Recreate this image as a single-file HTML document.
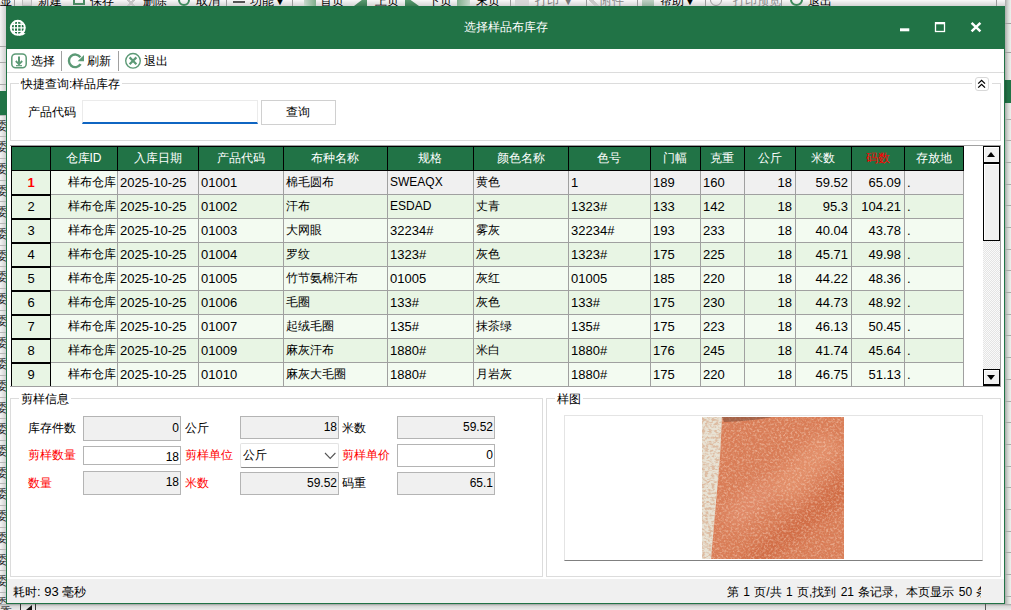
<!DOCTYPE html>
<html><head><meta charset="utf-8">
<style>
*{box-sizing:border-box;margin:0;padding:0}
html,body{width:1011px;height:610px;overflow:hidden;background:#fff}
body{position:relative;font-family:"Liberation Sans",sans-serif;font-size:12px;color:#000}
.a{position:absolute}
.lat{font-size:13px}
#bgtop{left:0;top:0;width:1011px;height:6px;background:linear-gradient(#f4f4f4,#d8d8d8)}
#bgleft{left:0;top:6px;width:6px;height:604px;background:linear-gradient(90deg,#f2f2f2,#c9c9c9)}
#bgright{left:1005px;top:0;width:6px;height:610px;background:linear-gradient(90deg,#b0b0b0,#e8e8e8)}
#bgbot{left:0;top:604px;width:1011px;height:6px;background:linear-gradient(#9a9a9a,#e0e0e0)}
#dlg{left:6px;top:6px;width:999px;height:598px;background:#217346}
#client{left:7px;top:49px;width:997px;height:554px;background:#fff}
#title{left:6px;top:6px;width:999px;height:43px;color:#fff;text-align:center;line-height:43px;font-size:12px}
.tb{top:52px;height:18px;line-height:18px}
.sep{top:51px;width:1px;height:20px;background:#a0a0a0}
#tbline{left:7px;top:72px;width:997px;height:1px;background:#dcdcdc}
.gb{border:1px solid #dcdcdc}
.gbt{background:#fff;padding:0 2px;height:14px;line-height:14px}
#grid{left:11px;top:146px;width:953px;height:241px;overflow:hidden;background:#fff}
.hd{position:absolute;top:147px;height:23px;color:#fff;text-align:center;line-height:23px;white-space:nowrap;padding-right:1px}
.c{position:absolute;height:23px;line-height:23px;padding:0 3px 0 2px;white-space:nowrap;overflow:hidden}
.r{text-align:right}
.rh{position:absolute;height:23px;line-height:23px;text-align:center}
.inp{position:absolute;border:1px solid #b4b4b4;background:#f0f0f0;text-align:right;padding-right:1px;font-size:12px}
.inpw{background:#fff}
.lbl{position:absolute;height:16px;line-height:16px}
.red{color:#f00}
</style></head><body>
<div class="a" style="left:0;top:0;width:1011px;height:6px;overflow:hidden;background:linear-gradient(#f8f8f8,#d4d4d4)"><div class="a" style="left:0px;top:-6px;color:#000;line-height:14px;white-space:nowrap">显</div><div class="a" style="left:38px;top:-6px;color:#000;line-height:14px;white-space:nowrap">新建</div><div class="a" style="left:90px;top:-6px;color:#000;line-height:14px;white-space:nowrap">保存</div><div class="a" style="left:143px;top:-6px;color:#000;line-height:14px;white-space:nowrap">删除</div><div class="a" style="left:196px;top:-6px;color:#000;line-height:14px;white-space:nowrap">取消</div><div class="a" style="left:250px;top:-6px;color:#000;line-height:14px;white-space:nowrap">功能▼</div><div class="a" style="left:320px;top:-6px;color:#000;line-height:14px;white-space:nowrap">首页</div><div class="a" style="left:375px;top:-6px;color:#000;line-height:14px;white-space:nowrap">上页</div><div class="a" style="left:428px;top:-6px;color:#000;line-height:14px;white-space:nowrap">下页</div><div class="a" style="left:476px;top:-6px;color:#000;line-height:14px;white-space:nowrap">末页</div><div class="a" style="left:535px;top:-6px;color:#777;line-height:14px;white-space:nowrap">打印 ▼</div><div class="a" style="left:600px;top:-6px;color:#888;line-height:14px;white-space:nowrap">附件</div><div class="a" style="left:660px;top:-6px;color:#000;line-height:14px;white-space:nowrap">帮助▼</div><div class="a" style="left:733px;top:-6px;color:#888;line-height:14px;white-space:nowrap">打印预览</div><div class="a" style="left:808px;top:-6px;color:#000;line-height:14px;white-space:nowrap">退出</div><div class="a" style="left:22px;top:0;width:10px;height:6px;border:1px solid #bbb;border-top:0;background:linear-gradient(#eee,#ccc)"></div><div class="a" style="left:73px;top:0;width:12px;height:5px;border:2px solid #4a8a62;border-top:0"></div><div class="a" style="left:125px;top:0;width:12px;height:6px;background:linear-gradient(45deg,transparent 40%,#c4c4c4 40%,#c4c4c4 60%,transparent 60%),linear-gradient(-45deg,transparent 40%,#c4c4c4 40%,#c4c4c4 60%,transparent 60%)"></div><div class="a" style="left:178px;top:-6px;width:12px;height:12px;border:2px solid #3f8a5c;border-radius:50%"></div><div class="a" style="left:233px;top:1px;width:12px;height:2px;background:#555;box-shadow:0 -3px #555"></div><div class="a" style="left:304px;top:0;width:12px;height:6px;background:linear-gradient(90deg,#c8d8cc,#7fae8c)"></div><div class="a" style="left:354px;top:0;width:13px;height:6px;background:linear-gradient(#5a9a70,#3a7a52);clip-path:polygon(60% 0,100% 0,100% 100%,0 100%)"></div><div class="a" style="left:405px;top:0;width:14px;height:6px;background:linear-gradient(#5a9a70,#3a7a52);clip-path:polygon(0 0,40% 0,100% 100%,0 100%)"></div><div class="a" style="left:457px;top:0;width:13px;height:6px;background:linear-gradient(90deg,#7fae8c,#c8d8cc)"></div><div class="a" style="left:515px;top:0;width:14px;height:6px;background:#ccc;opacity:.7"></div><div class="a" style="left:588px;top:0;width:12px;height:6px;background:linear-gradient(45deg,transparent 35%,#c8c8c8 35%,#c8c8c8 65%,transparent 65%)"></div><div class="a" style="left:642px;top:0;width:12px;height:6px;background:linear-gradient(#9ab8a2,#6a9a7a);opacity:.6"></div><div class="a" style="left:710px;top:-6px;width:12px;height:12px;border:1px solid #999;border-radius:50%"></div><div class="a" style="left:790px;top:-6px;width:13px;height:12px;border:2px solid #3f8a5c;border-radius:50%"></div><div class="a" style="left:14px;top:0;width:1px;height:6px;background:#9a9a9a"></div><div class="a" style="left:226px;top:0;width:1px;height:6px;background:#9a9a9a"></div><div class="a" style="left:292px;top:0;width:1px;height:6px;background:#9a9a9a"></div><div class="a" style="left:510px;top:0;width:1px;height:6px;background:#9a9a9a"></div><div class="a" style="left:586px;top:0;width:1px;height:6px;background:#9a9a9a"></div><div class="a" style="left:637px;top:0;width:1px;height:6px;background:#9a9a9a"></div><div class="a" style="left:705px;top:0;width:1px;height:6px;background:#9a9a9a"></div><div class="a" style="left:781px;top:0;width:1px;height:6px;background:#9a9a9a"></div><div class="a" style="left:996px;top:0;width:1px;height:6px;background:#9a9a9a"></div></div>
<div class="a" style="left:0;top:6px;width:6px;height:604px;overflow:hidden;background:linear-gradient(90deg,#f4f4f4,#cfcfcf)"><div class="a" style="left:0;top:40px;width:6px;height:1px;background:#a8a8a8"></div><div class="a" style="left:0;top:56px;width:6px;height:1px;background:#a8a8a8"></div><div class="a" style="left:0;top:78px;width:6px;height:1px;background:#a8a8a8"></div><div class="a" style="left:0;top:85px;width:6px;height:24px;background:#217346"></div><div class="a" style="left:0;top:109px;width:6px;height:1px;background:#b8b8b8"></div><div class="a" style="left:-4px;top:113px;font-size:12px;line-height:14px;color:#222">委</div><div class="a" style="left:0;top:130px;width:6px;height:1px;background:#b8b8b8"></div><div class="a" style="left:-4px;top:134px;font-size:12px;line-height:14px;color:#222">委</div><div class="a" style="left:0;top:152px;width:6px;height:1px;background:#b8b8b8"></div><div class="a" style="left:-4px;top:156px;font-size:12px;line-height:14px;color:#222">委</div><div class="a" style="left:0;top:174px;width:6px;height:1px;background:#b8b8b8"></div><div class="a" style="left:-4px;top:178px;font-size:12px;line-height:14px;color:#222">委</div><div class="a" style="left:0;top:195px;width:6px;height:1px;background:#b8b8b8"></div><div class="a" style="left:-4px;top:199px;font-size:12px;line-height:14px;color:#222">委</div><div class="a" style="left:0;top:217px;width:6px;height:1px;background:#b8b8b8"></div><div class="a" style="left:-4px;top:221px;font-size:12px;line-height:14px;color:#222">委</div><div class="a" style="left:0;top:239px;width:6px;height:1px;background:#b8b8b8"></div><div class="a" style="left:-4px;top:243px;font-size:12px;line-height:14px;color:#222">委</div><div class="a" style="left:0;top:260px;width:6px;height:1px;background:#b8b8b8"></div><div class="a" style="left:-4px;top:264px;font-size:12px;line-height:14px;color:#222">委</div><div class="a" style="left:0;top:282px;width:6px;height:1px;background:#b8b8b8"></div><div class="a" style="left:-4px;top:286px;font-size:12px;line-height:14px;color:#222">委</div><div class="a" style="left:0;top:304px;width:6px;height:1px;background:#b8b8b8"></div><div class="a" style="left:-4px;top:308px;font-size:12px;line-height:14px;color:#222">委</div><div class="a" style="left:0;top:326px;width:6px;height:1px;background:#b8b8b8"></div><div class="a" style="left:-4px;top:330px;font-size:12px;line-height:14px;color:#222">委</div><div class="a" style="left:0;top:347px;width:6px;height:1px;background:#b8b8b8"></div><div class="a" style="left:-4px;top:351px;font-size:12px;line-height:14px;color:#222">委</div><div class="a" style="left:0;top:369px;width:6px;height:1px;background:#b8b8b8"></div><div class="a" style="left:-4px;top:373px;font-size:12px;line-height:14px;color:#222">委</div><div class="a" style="left:0;top:391px;width:6px;height:1px;background:#b8b8b8"></div><div class="a" style="left:-4px;top:395px;font-size:12px;line-height:14px;color:#222">委</div><div class="a" style="left:0;top:412px;width:6px;height:1px;background:#b8b8b8"></div><div class="a" style="left:-4px;top:416px;font-size:12px;line-height:14px;color:#222">委</div><div class="a" style="left:0;top:434px;width:6px;height:1px;background:#b8b8b8"></div><div class="a" style="left:-4px;top:438px;font-size:12px;line-height:14px;color:#222">委</div><div class="a" style="left:0;top:456px;width:6px;height:1px;background:#b8b8b8"></div><div class="a" style="left:-4px;top:460px;font-size:12px;line-height:14px;color:#222">委</div><div class="a" style="left:0;top:477px;width:6px;height:1px;background:#b8b8b8"></div><div class="a" style="left:-4px;top:481px;font-size:12px;line-height:14px;color:#222">委</div><div class="a" style="left:0;top:499px;width:6px;height:1px;background:#b8b8b8"></div><div class="a" style="left:-4px;top:503px;font-size:12px;line-height:14px;color:#222">委</div><div class="a" style="left:0;top:521px;width:6px;height:1px;background:#b8b8b8"></div><div class="a" style="left:-4px;top:525px;font-size:12px;line-height:14px;color:#222">委</div><div class="a" style="left:0;top:543px;width:6px;height:1px;background:#b8b8b8"></div><div class="a" style="left:-4px;top:547px;font-size:12px;line-height:14px;color:#222">委</div><div class="a" style="left:0;top:564px;width:6px;height:1px;background:#b8b8b8"></div><div class="a" style="left:-4px;top:568px;font-size:12px;line-height:14px;color:#222">委</div><div class="a" style="left:0;top:586px;width:6px;height:1px;background:#b8b8b8"></div><div class="a" style="left:-4px;top:590px;font-size:12px;line-height:14px;color:#222">委</div></div>
<div class="a" style="left:1005px;top:0;width:6px;height:610px;overflow:hidden;background:linear-gradient(90deg,#a9aba9,#d4d8d4 3px,#eef2ee)"><div class="a" style="left:0;top:23px;width:6px;height:1px;background:#a0a0a0"></div><div class="a" style="left:0;top:52px;width:6px;height:1px;background:#a0a0a0"></div><div class="a" style="left:0;top:84px;width:6px;height:1px;background:#a0a0a0"></div><div class="a" style="left:0;top:80px;width:6px;height:23px;background:linear-gradient(90deg,#1e5a38,#217346 3px)"></div><div class="a" style="left:0;top:119px;width:6px;height:1px;background:#a8aca8"></div><div class="a" style="left:0;top:140px;width:6px;height:1px;background:#a8aca8"></div><div class="a" style="left:0;top:162px;width:6px;height:1px;background:#a8aca8"></div><div class="a" style="left:0;top:184px;width:6px;height:1px;background:#a8aca8"></div><div class="a" style="left:0;top:205px;width:6px;height:1px;background:#a8aca8"></div><div class="a" style="left:0;top:227px;width:6px;height:1px;background:#a8aca8"></div><div class="a" style="left:0;top:249px;width:6px;height:1px;background:#a8aca8"></div><div class="a" style="left:0;top:270px;width:6px;height:1px;background:#a8aca8"></div><div class="a" style="left:0;top:292px;width:6px;height:1px;background:#a8aca8"></div><div class="a" style="left:0;top:314px;width:6px;height:1px;background:#a8aca8"></div><div class="a" style="left:0;top:335px;width:6px;height:1px;background:#a8aca8"></div><div class="a" style="left:0;top:357px;width:6px;height:1px;background:#a8aca8"></div><div class="a" style="left:0;top:379px;width:6px;height:1px;background:#a8aca8"></div><div class="a" style="left:0;top:401px;width:6px;height:1px;background:#a8aca8"></div><div class="a" style="left:0;top:422px;width:6px;height:1px;background:#a8aca8"></div><div class="a" style="left:0;top:444px;width:6px;height:1px;background:#a8aca8"></div><div class="a" style="left:0;top:466px;width:6px;height:1px;background:#a8aca8"></div><div class="a" style="left:0;top:487px;width:6px;height:1px;background:#a8aca8"></div><div class="a" style="left:0;top:509px;width:6px;height:1px;background:#a8aca8"></div><div class="a" style="left:0;top:531px;width:6px;height:1px;background:#a8aca8"></div><div class="a" style="left:0;top:552px;width:6px;height:1px;background:#a8aca8"></div><div class="a" style="left:0;top:574px;width:6px;height:1px;background:#a8aca8"></div><div class="a" style="left:0;top:596px;width:6px;height:1px;background:#a8aca8"></div></div>
<div class="a" style="left:0;top:604px;width:1011px;height:6px;overflow:hidden;background:linear-gradient(#a0a0a0,#d8d8d8 2px,#ececec)"><div class="a" style="left:0;top:1px;font-size:12px;line-height:14px;color:#222">委</div><div class="a" style="left:20px;top:0;width:1px;height:6px;background:#333"></div><div class="a" style="left:26px;top:1px;width:0;height:0;border-top:5px solid transparent;border-right:6px solid #111"></div><div class="a" style="left:35px;top:0;width:1px;height:6px;background:#333"></div><div class="a" style="left:985px;top:0;width:1px;height:6px;background:#555"></div></div>
<div class="a" id="dlg"></div>
<div class="a" id="client"></div>

<svg class="a" style="left:0;top:0" width="200" height="80" viewBox="0 0 200 80">
 <g fill="none" stroke="#5c9a76">
  <rect x="11.8" y="54" width="14.4" height="13.8" rx="3.8" stroke-width="1.5"/>
  <path d="M19 56.5V64.5" stroke-width="2"/>
  <path d="M15.8 61L19 64.3L22.2 61" stroke-width="1.8"/>
  <path d="M16 65.7H22" stroke-width="1.2"/>
  <path d="M80.6 64.2A6.3 6.3 0 1 1 80.4 57.2" stroke-width="2.4"/>
  <circle cx="133" cy="60.8" r="7.3" stroke-width="1.4"/>
  <path d="M129.6 57.4L136.4 64.2M136.4 57.4L129.6 64.2" stroke-width="2.2"/>
 </g>
 <path d="M84 55V61.2H77.6Z" fill="#5c9a76"/>
 <defs><clipPath id="gc"><circle cx="17.8" cy="27.8" r="7.5"/></clipPath></defs>
 <circle cx="17.8" cy="27.8" r="7" fill="none" stroke="#fff" stroke-width="1.9"/>
 <g clip-path="url(#gc)" stroke="#fff" fill="none">
  <path d="M9 24.3H27M9 27.9H27M9 31.4H27" stroke-width="1.25"/>
  <path d="M14.4 18V38M17.6 18V38M21.2 18V38" stroke-width="1.2"/>
 </g>
 <path d="M18.5 35.8L21.5 32.2L25.6 33.6Q23 36 18.5 35.8Z" fill="#fff"/>
</svg>
<svg class="a" style="left:890px;top:12px" width="110" height="30" viewBox="890 12 110 30">
 <rect x="900" y="28.3" width="9.3" height="3" fill="#fff"/>
 <rect x="935.5" y="22.8" width="9" height="8.7" fill="none" stroke="#fff" stroke-width="1.3"/>
 <rect x="935" y="22" width="10" height="2.3" fill="#fff"/>
 <path d="M971.6 22.9L980.4 31.4M980.4 22.9L971.6 31.4" stroke="#fff" stroke-width="2.5"/>
</svg>
<div class="a" id="title">选择样品布库存</div>

<div class="a tb" style="left:31px">选择</div>
<div class="a sep" style="left:61px"></div>
<div class="a tb" style="left:87px">刷新</div>
<div class="a sep" style="left:118px"></div>
<div class="a tb" style="left:144px">退出</div>
<div class="a" id="tbline"></div>

<div class="a gb" style="left:10px;top:83px;width:991px;height:58px"></div>
<div class="a gbt" style="left:19px;top:77px">快捷查询:样品库存</div>
<div class="a" style="left:972px;top:80px;width:20px;height:6px;background:#fff"></div>
<div class="a" style="left:975px;top:77px;width:14px;height:14px;border:1px solid #d8d8d8;border-radius:3px;background:#fff"></div>
<svg class="a" style="left:975px;top:77px" width="14" height="14" viewBox="975 77 14 14"><path d="M978.2 83.6L981.6 80.3L985 83.6M978.2 87.6L981.6 84.3L985 87.6" fill="none" stroke="#000" stroke-width="1.3"/></svg>
<div class="a lbl" style="left:28px;top:104px">产品代码</div>
<div class="a" style="left:82px;top:100px;width:176px;height:24px;border:1px solid #ebebeb;border-bottom:2px solid #0f65c2;background:#fff"></div>
<div class="a" style="left:261px;top:100px;width:75px;height:25px;border:1px solid #d0d0d0;background:#fff;text-align:center;line-height:23px;padding-right:2px">查询</div>

<div class="a" style="left:10px;top:145px;width:991px;height:1px;background:#a0a0a0;"></div>
<div class="a" style="left:1000px;top:145px;width:1px;height:242px;background:#a0a0a0;"></div>
<div class="a" style="left:10px;top:386px;width:991px;height:1px;background:#a0a0a0;"></div>
<div class="a" style="left:11px;top:146px;width:953px;height:25px;background:#000;"></div>
<div class="a" style="left:12px;top:147px;width:951px;height:23px;background:#217346;"></div>
<div class="a" style="left:50px;top:146px;width:1px;height:25px;background:#000;"></div>
<div class="a" style="left:117px;top:146px;width:1px;height:25px;background:#000;"></div>
<div class="a" style="left:198px;top:146px;width:1px;height:25px;background:#000;"></div>
<div class="a" style="left:283px;top:146px;width:1px;height:25px;background:#000;"></div>
<div class="a" style="left:387px;top:146px;width:1px;height:25px;background:#000;"></div>
<div class="a" style="left:473px;top:146px;width:1px;height:25px;background:#000;"></div>
<div class="a" style="left:568px;top:146px;width:1px;height:25px;background:#000;"></div>
<div class="a" style="left:650px;top:146px;width:1px;height:25px;background:#000;"></div>
<div class="a" style="left:700px;top:146px;width:1px;height:25px;background:#000;"></div>
<div class="a" style="left:744px;top:146px;width:1px;height:25px;background:#000;"></div>
<div class="a" style="left:795px;top:146px;width:1px;height:25px;background:#000;"></div>
<div class="a" style="left:851px;top:146px;width:1px;height:25px;background:#000;"></div>
<div class="a" style="left:904px;top:146px;width:1px;height:25px;background:#000;"></div>
<div class="hd" style="left:51px;width:66px;color:#fff">仓库<span class="lat" style="font-size:12px">ID</span></div>
<div class="hd" style="left:118px;width:80px;color:#fff">入库日期</div>
<div class="hd" style="left:199px;width:84px;color:#fff">产品代码</div>
<div class="hd" style="left:284px;width:103px;color:#fff">布种名称</div>
<div class="hd" style="left:388px;width:85px;color:#fff">规格</div>
<div class="hd" style="left:474px;width:94px;color:#fff">颜色名称</div>
<div class="hd" style="left:569px;width:81px;color:#fff">色号</div>
<div class="hd" style="left:651px;width:49px;color:#fff">门幅</div>
<div class="hd" style="left:701px;width:43px;color:#fff">克重</div>
<div class="hd" style="left:745px;width:50px;color:#fff">公斤</div>
<div class="hd" style="left:796px;width:55px;color:#fff">米数</div>
<div class="hd" style="left:852px;width:52px;color:#f00">码数</div>
<div class="hd" style="left:905px;width:58px;color:#fff">存放地</div>
<div class="a" style="left:51px;top:171px;width:912px;height:23px;background:#f0f0f0;"></div>
<div class="a" style="left:51px;top:171px;width:66px;height:23px;background:#f3fbf1;"></div>
<div class="c r" style="left:51px;top:171px;width:66px;padding-right:1.5px">样布仓库</div>
<div class="c" style="left:118px;top:171px;width:80px"><span class="lat">2025-10-25</span></div>
<div class="c" style="left:199px;top:171px;width:84px"><span class="lat">01001</span></div>
<div class="c" style="left:284px;top:171px;width:103px">棉毛圆布</div>
<div class="c" style="left:388px;top:171px;width:85px"><span class="lat" style="font-size:12px">SWEAQX</span></div>
<div class="c" style="left:474px;top:171px;width:94px">黄色</div>
<div class="c" style="left:569px;top:171px;width:81px"><span class="lat">1</span></div>
<div class="c" style="left:651px;top:171px;width:49px"><span class="lat">189</span></div>
<div class="c" style="left:701px;top:171px;width:43px"><span class="lat">160</span></div>
<div class="c r" style="left:745px;top:171px;width:50px"><span class="lat">18</span></div>
<div class="c r" style="left:796px;top:171px;width:55px"><span class="lat">59.52</span></div>
<div class="c r" style="left:852px;top:171px;width:52px"><span class="lat">65.09</span></div>
<div class="c" style="left:905px;top:171px;width:58px"><span class="lat">.</span></div>
<div class="a" style="left:51px;top:194px;width:913px;height:1px;background:#a0a0a0;"></div>
<div class="a" style="left:51px;top:195px;width:912px;height:23px;background:#e8f5e4;"></div>
<div class="c r" style="left:51px;top:195px;width:66px;padding-right:1.5px">样布仓库</div>
<div class="c" style="left:118px;top:195px;width:80px"><span class="lat">2025-10-25</span></div>
<div class="c" style="left:199px;top:195px;width:84px"><span class="lat">01002</span></div>
<div class="c" style="left:284px;top:195px;width:103px">汗布</div>
<div class="c" style="left:388px;top:195px;width:85px"><span class="lat" style="font-size:12px">ESDAD</span></div>
<div class="c" style="left:474px;top:195px;width:94px">丈青</div>
<div class="c" style="left:569px;top:195px;width:81px"><span class="lat">1323#</span></div>
<div class="c" style="left:651px;top:195px;width:49px"><span class="lat">133</span></div>
<div class="c" style="left:701px;top:195px;width:43px"><span class="lat">142</span></div>
<div class="c r" style="left:745px;top:195px;width:50px"><span class="lat">18</span></div>
<div class="c r" style="left:796px;top:195px;width:55px"><span class="lat">95.3</span></div>
<div class="c r" style="left:852px;top:195px;width:52px"><span class="lat">104.21</span></div>
<div class="c" style="left:905px;top:195px;width:58px"><span class="lat">.</span></div>
<div class="a" style="left:51px;top:218px;width:913px;height:1px;background:#a0a0a0;"></div>
<div class="a" style="left:51px;top:219px;width:912px;height:23px;background:#f3fbf1;"></div>
<div class="c r" style="left:51px;top:219px;width:66px;padding-right:1.5px">样布仓库</div>
<div class="c" style="left:118px;top:219px;width:80px"><span class="lat">2025-10-25</span></div>
<div class="c" style="left:199px;top:219px;width:84px"><span class="lat">01003</span></div>
<div class="c" style="left:284px;top:219px;width:103px">大网眼</div>
<div class="c" style="left:388px;top:219px;width:85px"><span class="lat">32234#</span></div>
<div class="c" style="left:474px;top:219px;width:94px">雾灰</div>
<div class="c" style="left:569px;top:219px;width:81px"><span class="lat">32234#</span></div>
<div class="c" style="left:651px;top:219px;width:49px"><span class="lat">193</span></div>
<div class="c" style="left:701px;top:219px;width:43px"><span class="lat">233</span></div>
<div class="c r" style="left:745px;top:219px;width:50px"><span class="lat">18</span></div>
<div class="c r" style="left:796px;top:219px;width:55px"><span class="lat">40.04</span></div>
<div class="c r" style="left:852px;top:219px;width:52px"><span class="lat">43.78</span></div>
<div class="c" style="left:905px;top:219px;width:58px"><span class="lat">.</span></div>
<div class="a" style="left:51px;top:242px;width:913px;height:1px;background:#a0a0a0;"></div>
<div class="a" style="left:51px;top:243px;width:912px;height:23px;background:#e8f5e4;"></div>
<div class="c r" style="left:51px;top:243px;width:66px;padding-right:1.5px">样布仓库</div>
<div class="c" style="left:118px;top:243px;width:80px"><span class="lat">2025-10-25</span></div>
<div class="c" style="left:199px;top:243px;width:84px"><span class="lat">01004</span></div>
<div class="c" style="left:284px;top:243px;width:103px">罗纹</div>
<div class="c" style="left:388px;top:243px;width:85px"><span class="lat">1323#</span></div>
<div class="c" style="left:474px;top:243px;width:94px">灰色</div>
<div class="c" style="left:569px;top:243px;width:81px"><span class="lat">1323#</span></div>
<div class="c" style="left:651px;top:243px;width:49px"><span class="lat">175</span></div>
<div class="c" style="left:701px;top:243px;width:43px"><span class="lat">225</span></div>
<div class="c r" style="left:745px;top:243px;width:50px"><span class="lat">18</span></div>
<div class="c r" style="left:796px;top:243px;width:55px"><span class="lat">45.71</span></div>
<div class="c r" style="left:852px;top:243px;width:52px"><span class="lat">49.98</span></div>
<div class="c" style="left:905px;top:243px;width:58px"><span class="lat">.</span></div>
<div class="a" style="left:51px;top:266px;width:913px;height:1px;background:#a0a0a0;"></div>
<div class="a" style="left:51px;top:267px;width:912px;height:23px;background:#f3fbf1;"></div>
<div class="c r" style="left:51px;top:267px;width:66px;padding-right:1.5px">样布仓库</div>
<div class="c" style="left:118px;top:267px;width:80px"><span class="lat">2025-10-25</span></div>
<div class="c" style="left:199px;top:267px;width:84px"><span class="lat">01005</span></div>
<div class="c" style="left:284px;top:267px;width:103px">竹节氨棉汗布</div>
<div class="c" style="left:388px;top:267px;width:85px"><span class="lat">01005</span></div>
<div class="c" style="left:474px;top:267px;width:94px">灰红</div>
<div class="c" style="left:569px;top:267px;width:81px"><span class="lat">01005</span></div>
<div class="c" style="left:651px;top:267px;width:49px"><span class="lat">185</span></div>
<div class="c" style="left:701px;top:267px;width:43px"><span class="lat">220</span></div>
<div class="c r" style="left:745px;top:267px;width:50px"><span class="lat">18</span></div>
<div class="c r" style="left:796px;top:267px;width:55px"><span class="lat">44.22</span></div>
<div class="c r" style="left:852px;top:267px;width:52px"><span class="lat">48.36</span></div>
<div class="c" style="left:905px;top:267px;width:58px"><span class="lat">.</span></div>
<div class="a" style="left:51px;top:290px;width:913px;height:1px;background:#a0a0a0;"></div>
<div class="a" style="left:51px;top:291px;width:912px;height:23px;background:#e8f5e4;"></div>
<div class="c r" style="left:51px;top:291px;width:66px;padding-right:1.5px">样布仓库</div>
<div class="c" style="left:118px;top:291px;width:80px"><span class="lat">2025-10-25</span></div>
<div class="c" style="left:199px;top:291px;width:84px"><span class="lat">01006</span></div>
<div class="c" style="left:284px;top:291px;width:103px">毛圈</div>
<div class="c" style="left:388px;top:291px;width:85px"><span class="lat">133#</span></div>
<div class="c" style="left:474px;top:291px;width:94px">灰色</div>
<div class="c" style="left:569px;top:291px;width:81px"><span class="lat">133#</span></div>
<div class="c" style="left:651px;top:291px;width:49px"><span class="lat">175</span></div>
<div class="c" style="left:701px;top:291px;width:43px"><span class="lat">230</span></div>
<div class="c r" style="left:745px;top:291px;width:50px"><span class="lat">18</span></div>
<div class="c r" style="left:796px;top:291px;width:55px"><span class="lat">44.73</span></div>
<div class="c r" style="left:852px;top:291px;width:52px"><span class="lat">48.92</span></div>
<div class="c" style="left:905px;top:291px;width:58px"><span class="lat">.</span></div>
<div class="a" style="left:51px;top:314px;width:913px;height:1px;background:#a0a0a0;"></div>
<div class="a" style="left:51px;top:315px;width:912px;height:23px;background:#f3fbf1;"></div>
<div class="c r" style="left:51px;top:315px;width:66px;padding-right:1.5px">样布仓库</div>
<div class="c" style="left:118px;top:315px;width:80px"><span class="lat">2025-10-25</span></div>
<div class="c" style="left:199px;top:315px;width:84px"><span class="lat">01007</span></div>
<div class="c" style="left:284px;top:315px;width:103px">起绒毛圈</div>
<div class="c" style="left:388px;top:315px;width:85px"><span class="lat">135#</span></div>
<div class="c" style="left:474px;top:315px;width:94px">抹茶绿</div>
<div class="c" style="left:569px;top:315px;width:81px"><span class="lat">135#</span></div>
<div class="c" style="left:651px;top:315px;width:49px"><span class="lat">175</span></div>
<div class="c" style="left:701px;top:315px;width:43px"><span class="lat">223</span></div>
<div class="c r" style="left:745px;top:315px;width:50px"><span class="lat">18</span></div>
<div class="c r" style="left:796px;top:315px;width:55px"><span class="lat">46.13</span></div>
<div class="c r" style="left:852px;top:315px;width:52px"><span class="lat">50.45</span></div>
<div class="c" style="left:905px;top:315px;width:58px"><span class="lat">.</span></div>
<div class="a" style="left:51px;top:338px;width:913px;height:1px;background:#a0a0a0;"></div>
<div class="a" style="left:51px;top:339px;width:912px;height:23px;background:#e8f5e4;"></div>
<div class="c r" style="left:51px;top:339px;width:66px;padding-right:1.5px">样布仓库</div>
<div class="c" style="left:118px;top:339px;width:80px"><span class="lat">2025-10-25</span></div>
<div class="c" style="left:199px;top:339px;width:84px"><span class="lat">01009</span></div>
<div class="c" style="left:284px;top:339px;width:103px">麻灰汗布</div>
<div class="c" style="left:388px;top:339px;width:85px"><span class="lat">1880#</span></div>
<div class="c" style="left:474px;top:339px;width:94px">米白</div>
<div class="c" style="left:569px;top:339px;width:81px"><span class="lat">1880#</span></div>
<div class="c" style="left:651px;top:339px;width:49px"><span class="lat">176</span></div>
<div class="c" style="left:701px;top:339px;width:43px"><span class="lat">245</span></div>
<div class="c r" style="left:745px;top:339px;width:50px"><span class="lat">18</span></div>
<div class="c r" style="left:796px;top:339px;width:55px"><span class="lat">41.74</span></div>
<div class="c r" style="left:852px;top:339px;width:52px"><span class="lat">45.64</span></div>
<div class="c" style="left:905px;top:339px;width:58px"><span class="lat">.</span></div>
<div class="a" style="left:51px;top:362px;width:913px;height:1px;background:#a0a0a0;"></div>
<div class="a" style="left:51px;top:363px;width:912px;height:23px;background:#f3fbf1;"></div>
<div class="c r" style="left:51px;top:363px;width:66px;padding-right:1.5px">样布仓库</div>
<div class="c" style="left:118px;top:363px;width:80px"><span class="lat">2025-10-25</span></div>
<div class="c" style="left:199px;top:363px;width:84px"><span class="lat">01010</span></div>
<div class="c" style="left:284px;top:363px;width:103px">麻灰大毛圈</div>
<div class="c" style="left:388px;top:363px;width:85px"><span class="lat">1880#</span></div>
<div class="c" style="left:474px;top:363px;width:94px">月岩灰</div>
<div class="c" style="left:569px;top:363px;width:81px"><span class="lat">1880#</span></div>
<div class="c" style="left:651px;top:363px;width:49px"><span class="lat">175</span></div>
<div class="c" style="left:701px;top:363px;width:43px"><span class="lat">220</span></div>
<div class="c r" style="left:745px;top:363px;width:50px"><span class="lat">18</span></div>
<div class="c r" style="left:796px;top:363px;width:55px"><span class="lat">46.75</span></div>
<div class="c r" style="left:852px;top:363px;width:52px"><span class="lat">51.13</span></div>
<div class="c" style="left:905px;top:363px;width:58px"><span class="lat">.</span></div>
<div class="a" style="left:51px;top:386px;width:913px;height:1px;background:#a0a0a0;"></div>
<div class="a" style="left:117px;top:171px;width:1px;height:215px;background:#a0a0a0;"></div>
<div class="a" style="left:198px;top:171px;width:1px;height:215px;background:#a0a0a0;"></div>
<div class="a" style="left:283px;top:171px;width:1px;height:215px;background:#a0a0a0;"></div>
<div class="a" style="left:387px;top:171px;width:1px;height:215px;background:#a0a0a0;"></div>
<div class="a" style="left:473px;top:171px;width:1px;height:215px;background:#a0a0a0;"></div>
<div class="a" style="left:568px;top:171px;width:1px;height:215px;background:#a0a0a0;"></div>
<div class="a" style="left:650px;top:171px;width:1px;height:215px;background:#a0a0a0;"></div>
<div class="a" style="left:700px;top:171px;width:1px;height:215px;background:#a0a0a0;"></div>
<div class="a" style="left:744px;top:171px;width:1px;height:215px;background:#a0a0a0;"></div>
<div class="a" style="left:795px;top:171px;width:1px;height:215px;background:#a0a0a0;"></div>
<div class="a" style="left:851px;top:171px;width:1px;height:215px;background:#a0a0a0;"></div>
<div class="a" style="left:904px;top:171px;width:1px;height:215px;background:#a0a0a0;"></div>
<div class="a" style="left:963px;top:171px;width:1px;height:215px;background:#a0a0a0;"></div>
<div class="a" style="left:11px;top:171px;width:40px;height:215px;background:#e8f5e4;"></div>
<div class="a" style="left:11px;top:146px;width:1px;height:240px;background:#000;"></div>
<div class="a" style="left:50px;top:171px;width:1px;height:215px;background:#000;"></div>
<div class="rh" style="left:12px;top:171px;width:38px;color:#f00;font-weight:bold"><span class="lat">1</span></div>
<div class="a" style="left:12px;top:194px;width:38px;height:2px;background:#000;"></div>
<div class="rh" style="left:12px;top:195px;width:38px;"><span class="lat">2</span></div>
<div class="a" style="left:12px;top:218px;width:38px;height:2px;background:#000;"></div>
<div class="rh" style="left:12px;top:219px;width:38px;"><span class="lat">3</span></div>
<div class="a" style="left:12px;top:242px;width:38px;height:2px;background:#000;"></div>
<div class="rh" style="left:12px;top:243px;width:38px;"><span class="lat">4</span></div>
<div class="a" style="left:12px;top:266px;width:38px;height:2px;background:#000;"></div>
<div class="rh" style="left:12px;top:267px;width:38px;"><span class="lat">5</span></div>
<div class="a" style="left:12px;top:290px;width:38px;height:2px;background:#000;"></div>
<div class="rh" style="left:12px;top:291px;width:38px;"><span class="lat">6</span></div>
<div class="a" style="left:12px;top:314px;width:38px;height:2px;background:#000;"></div>
<div class="rh" style="left:12px;top:315px;width:38px;"><span class="lat">7</span></div>
<div class="a" style="left:12px;top:338px;width:38px;height:2px;background:#000;"></div>
<div class="rh" style="left:12px;top:339px;width:38px;"><span class="lat">8</span></div>
<div class="a" style="left:12px;top:362px;width:38px;height:2px;background:#000;"></div>
<div class="rh" style="left:12px;top:363px;width:38px;"><span class="lat">9</span></div>
<div class="a" style="left:983px;top:146px;width:17px;height:240px;background:#f0f0f0;"></div>
<div class="a" style="left:983px;top:241px;width:17px;height:128px;background-image:repeating-conic-gradient(#e4e4e4 0 25%,#fafafa 0 50%);background-size:2px 2px"></div>
<div class="a" style="left:983px;top:146px;width:17px;height:18px;border:1px solid #000;border-bottom-width:2px;background:#f0f0f0;box-shadow:inset 1px 1px #fff"></div>
<div class="a" style="left:983px;top:163px;width:17px;height:78px;border:1px solid #000;border-bottom-width:1px;background:#f0f0f0;box-shadow:inset 1px 1px #fff"></div>
<div class="a" style="left:983px;top:369px;width:17px;height:17px;border:1px solid #000;border-bottom-width:2px;background:#f0f0f0;box-shadow:inset 1px 1px #fff"></div>
<div class="a" style="left:987px;top:152px;width:0;height:0;border-left:4.5px solid transparent;border-right:4.5px solid transparent;border-bottom:5px solid #000"></div>
<div class="a" style="left:987px;top:375px;width:0;height:0;border-left:4.5px solid transparent;border-right:4.5px solid transparent;border-top:5px solid #000"></div>

<!-- lower left groupbox -->
<div class="a gb" style="left:10px;top:398px;width:533px;height:179px"></div>
<div class="a gbt" style="left:19px;top:392px">剪样信息</div>
<div class="a lbl" style="left:28px;top:420px">库存件数</div>
<div class="a lbl red" style="left:28px;top:447px">剪样数量</div>
<div class="a lbl red" style="left:28px;top:475px">数量</div>
<div class="inp" style="left:83px;top:416px;width:98px;height:25px;line-height:22px">0</div>
<div class="inp inpw" style="left:83px;top:446px;width:98px;height:19px;line-height:20px">18</div>
<div class="inp" style="left:83px;top:471px;width:98px;height:24px;line-height:21px">18</div>
<div class="a lbl" style="left:185px;top:420px">公斤</div>
<div class="a lbl red" style="left:185px;top:447px">剪样单位</div>
<div class="a lbl red" style="left:185px;top:475px">米数</div>
<div class="inp" style="left:240px;top:416px;width:99px;height:23px;line-height:20px">18</div>
<div class="a" style="left:240px;top:443px;width:99px;height:25px;border:1px solid #e3e3e3;border-bottom:1px solid #868686;border-radius:2px;background:#fff;line-height:23px;padding-left:2px">公斤</div>
<svg class="a" style="left:320px;top:448px" width="20" height="15" viewBox="320 448 20 15"><path d="M325 453L330.2 458.4L335.4 453" fill="none" stroke="#555" stroke-width="1.1"/></svg>
<div class="inp" style="left:240px;top:472px;width:99px;height:23px;line-height:20px">59.52</div>
<div class="a lbl" style="left:342px;top:420px">米数</div>
<div class="a lbl red" style="left:342px;top:447px">剪样单价</div>
<div class="a lbl" style="left:342px;top:475px">码重</div>
<div class="inp" style="left:397px;top:416px;width:98px;height:23px;line-height:21px">59.52</div>
<div class="inp inpw" style="left:397px;top:444px;width:98px;height:23px;line-height:21px">0</div>
<div class="inp" style="left:397px;top:472px;width:98px;height:23px;line-height:21px">65.1</div>

<!-- lower right groupbox -->
<div class="a gb" style="left:546px;top:398px;width:455px;height:179px"></div>
<div class="a gbt" style="left:555px;top:392px">样图</div>
<div class="a" style="left:564px;top:415px;width:419px;height:146px;border:1px solid #e4e4e4;border-bottom:1px solid #808080;background:#fff"></div>
<svg class="a" style="left:702px;top:417px" width="142" height="142" viewBox="0 0 142 142">
 <defs>
  <filter id="tx" x="0" y="0" width="100%" height="100%">
   <feTurbulence type="fractalNoise" baseFrequency="0.45" numOctaves="2" seed="7"/>
   <feColorMatrix type="matrix" values="0 0 0 0 0.97  0 0 0 0 0.72  0 0 0 0 0.58  -3.2 0 0 0 1.75"/>
  </filter>
  <filter id="tx2" x="0" y="0" width="100%" height="100%">
   <feTurbulence type="fractalNoise" baseFrequency="0.5" numOctaves="2" seed="11"/>
   <feColorMatrix type="matrix" values="0 0 0 0 0.68  0 0 0 0 0.32  0 0 0 0 0.18  3.2 0 0 0 -1.5"/>
  </filter>
  <filter id="bl"><feGaussianBlur stdDeviation="7"/></filter>
  <filter id="rim" x="0" y="0" width="100%" height="100%">
   <feTurbulence type="fractalNoise" baseFrequency="0.3 0.45" numOctaves="2" seed="3"/>
   <feColorMatrix type="matrix" values="0 0 0 0 0.72  0 0 0 0 0.5  0 0 0 0 0.36  4 0 0 0 -1.7"/>
  </filter>
  <clipPath id="rc"><path d="M0 0H20L18 40L9 142H0Z"/></clipPath>
 </defs>
 <rect width="142" height="142" fill="#d97c56"/>
 <g filter="url(#bl)" opacity="0.5">
  <path d="M30 150L150 50V80L60 150Z" fill="#c85a32"/>
  <path d="M60 70L120 15L142 30L90 85Z" fill="#eda07c"/>
  <path d="M20 95L60 60L78 78L35 115Z" fill="#e8997a"/>
 </g>
 <rect width="142" height="142" filter="url(#tx)" opacity="0.45"/>
 <rect width="142" height="142" filter="url(#tx2)" opacity="0.45"/>
 <path d="M20 0H70Q50 4 22 5Z" fill="#7a4a38" opacity="0.55"/>
 <g clip-path="url(#rc)">
  <rect width="22" height="142" fill="#e8e2d4"/>
  <rect width="22" height="142" filter="url(#rim)"/>
 </g>
</svg>

<!-- status bar -->
<div class="a" style="left:7px;top:579px;width:997px;height:24px;background:#f0f0f0"></div>
<div class="a" style="left:13px;top:584px;line-height:16px">耗时<span class="lat">: 93 </span>毫秒</div>
<div class="a" style="left:727px;top:584px;line-height:16px;width:254px;word-spacing:1px;overflow:hidden;white-space:nowrap">第 1 页/共 1 页,找到 21 条记录<span style="display:inline-block;width:12px">,</span>本页显示 50 条</div>
</body></html>
